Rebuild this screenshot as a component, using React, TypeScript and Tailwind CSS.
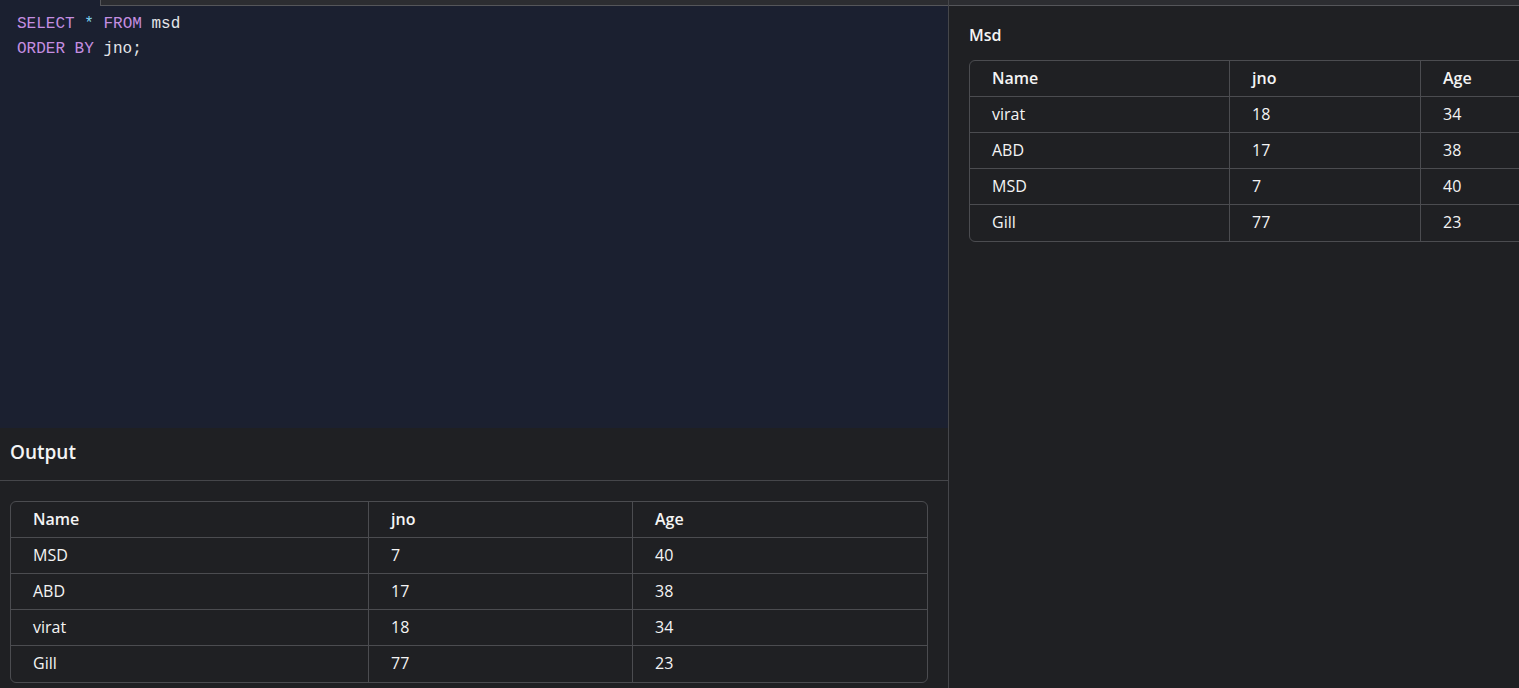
const outputRows = [
  { name: "MSD", jno: "7", age: "40" },
  { name: "ABD", jno: "17", age: "38" },
  { name: "virat", jno: "18", age: "34" },
  { name: "Gill", jno: "77", age: "23" },
]

const tableRows = [
  { name: "virat", jno: "18", age: "34" },
  { name: "ABD", jno: "17", age: "38" },
  { name: "MSD", jno: "7", age: "40" },
  { name: "Gill", jno: "77", age: "23" },
]

type Row = { name: string; jno: string; age: string }

function DataTable({ rows, widths }: { rows: Row[]; widths: [string, string, string] }) {
  const all = [{ name: "Name", jno: "jno", age: "Age" }, ...rows]
  return (
    <div className="rounded-md border border-[#4b4c50] overflow-hidden shrink-0">
      {all.map((row, i) => {
        const head = i === 0
        const last = i === all.length - 1
        return (
          <div
            key={i}
            className={`flex h-[36px] items-center ${last ? "" : "border-b border-[#4b4c50]"} ${head ? "font-semibold" : "font-medium"}`}
          >
            <div className={`${widths[0]} h-full flex items-center pl-[22px] pb-[2px] border-r border-[#4b4c50]`}>{row.name}</div>
            <div className={`${widths[1]} h-full flex items-center pl-[22px] pb-[2px] border-r border-[#4b4c50]`}>{row.jno}</div>
            <div className={`${widths[2]} h-full flex items-center pl-[22px] pb-[2px]`}>{row.age}</div>
          </div>
        )
      })}
    </div>
  )
}

export default function App() {
  return (
    <div
      className="flex h-[688px] w-[1519px] overflow-hidden bg-[#1f2023] text-[#f4f4f4] text-[16px]"
      style={{ fontFamily: "'Open Sans', 'Noto Sans', sans-serif" }}
    >
      {/* left pane */}
      <div className="w-[949px] shrink-0 flex flex-col border-r border-[#45464a]">
        <div className="h-[428px] bg-[#1b2030] flex flex-col">
          <div className="flex h-[6px] shrink-0">
            <div className="w-[100px]" />
            <div className="flex-1 bg-[#2c2d31] border-l border-b border-[#55565a]" />
          </div>
          <pre
            className="pl-[17px] pt-[6px] text-[16px] leading-[25px] text-[#e4e6ea]"
            style={{ fontFamily: "'Liberation Mono', 'DejaVu Sans Mono', monospace" }}
          >
            <span className="text-[#c58ee0]">SELECT</span> <span className="text-[#7fd3f2]">*</span>{" "}
            <span className="text-[#c58ee0]">FROM</span> msd{"\n"}
            <span className="text-[#c58ee0]">ORDER BY</span> jno;
          </pre>
        </div>
        <div className="h-[53px] shrink-0 flex items-center pl-[10px] pb-[4px] border-b border-[#45464a]">
          <span className="text-[19px] font-semibold">Output</span>
        </div>
        <div className="pt-[20px] pl-[10px] pr-[20px]">
          <DataTable rows={outputRows} widths={["w-[358px]", "w-[264px]", "flex-1"]} />
        </div>
      </div>

      {/* right pane */}
      <div className="flex-1 min-w-0 flex flex-col overflow-hidden">
        <div className="h-[6px] shrink-0 bg-[#2c2d31] border-b border-[#55565a]" />
        <div className="h-[54px] shrink-0 flex items-center pl-[20px] pt-[4px]">
          <span className="text-[16px] font-semibold">Msd</span>
        </div>
        <div className="pl-[20px]">
          <div className="w-[666px]">
            <DataTable rows={tableRows} widths={["w-[260px]", "w-[191px]", "flex-1"]} />
          </div>
        </div>
      </div>
    </div>
  )
}
